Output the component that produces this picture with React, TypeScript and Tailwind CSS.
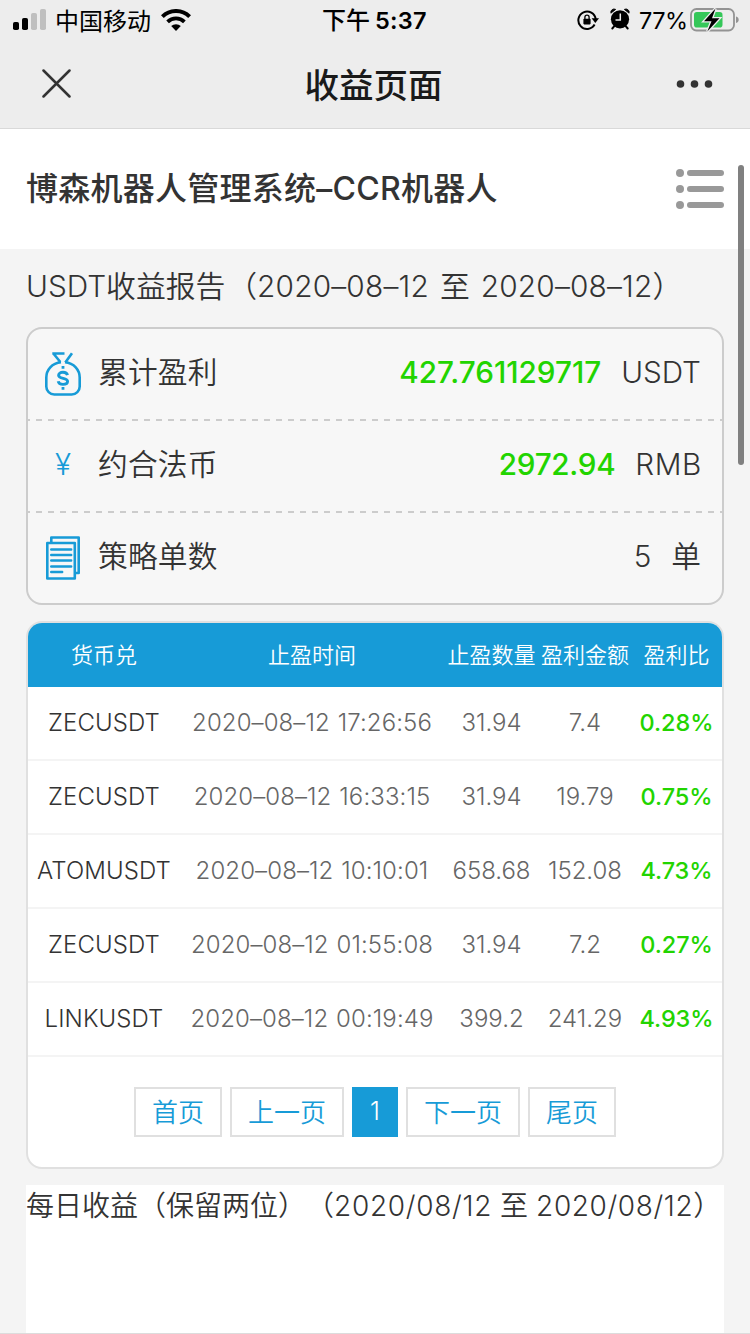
import type { ReactNode } from 'react';

interface ProfitRow {
  pair: string;
  time: string;
  amount: string;
  profit: string;
  rate: string;
}

const rows: ProfitRow[] = [
  { pair: 'ZECUSDT', time: '2020–08–12 17:26:56', amount: '31.94', profit: '7.4', rate: '0.28%' },
  { pair: 'ZECUSDT', time: '2020–08–12 16:33:15', amount: '31.94', profit: '19.79', rate: '0.75%' },
  { pair: 'ATOMUSDT', time: '2020–08–12 10:10:01', amount: '658.68', profit: '152.08', rate: '4.73%' },
  { pair: 'ZECUSDT', time: '2020–08–12 01:55:08', amount: '31.94', profit: '7.2', rate: '0.27%' },
  { pair: 'LINKUSDT', time: '2020–08–12 00:19:49', amount: '399.2', profit: '241.29', rate: '4.93%' },
];

const columns = ['货币兑', '止盈时间', '止盈数量', '盈利金额', '盈利比'];

function StatusBar() {
  return (
    <div className="flex h-10 items-center pl-[13px] text-[24px] text-black">
      <svg width="34" height="22" viewBox="0 0 34 22" className="-mt-0.5">
        <rect x="0" y="14" width="6" height="8" rx="1.8" fill="#000" />
        <rect x="9" y="10" width="6" height="12" rx="1.8" fill="#000" />
        <rect x="18" y="5" width="6" height="17" rx="1.8" fill="#bfbfbf" />
        <rect x="27" y="1" width="6" height="21" rx="1.8" fill="#bfbfbf" />
      </svg>
      <span className="ml-2 w-[97px] whitespace-nowrap pt-[3px]">中国移动</span>
      <svg width="30" height="22" viewBox="0 0 30 22" className="ml-[9px]">
        <path d="M1.4 7.6a19.3 19.3 0 0 1 27.2 0" fill="none" stroke="#000" strokeWidth="4" />
        <path d="M6.6 12.9a12 12 0 0 1 16.8 0" fill="none" stroke="#000" strokeWidth="3.8" />
        <path d="M15 22l-4.8-4.9a6.9 6.9 0 0 1 9.6 0z" fill="#000" />
      </svg>
      <span className="ml-[131px] w-[106px] whitespace-nowrap pt-0.5 font-medium">
        下午<span className="ml-[5px] text-[23.5px] font-semibold tracking-[0.3px]">5:37</span>
      </span>
      <svg width="22" height="22" viewBox="0 0 22 22" className="ml-[149px]">
        <path d="M17.6 15.6a8.7 8.7 0 1 1 1.1-5.4" fill="none" stroke="#000" strokeWidth="2" />
        <path d="M14.6 9.2h7.4l-3.7 4.8z" fill="#000" />
        <rect x="6.4" y="9.7" width="7.2" height="5.7" rx="0.8" fill="#000" />
        <path d="M7.9 10V8.2a2.1 2.1 0 0 1 4.2 0V10" fill="none" stroke="#000" strokeWidth="1.3" />
      </svg>
      <svg width="20" height="22" viewBox="0 0 20 22" className="-mt-0.5 ml-[11px]">
        <circle cx="10" cy="11.3" r="9.1" fill="#000" />
        <path d="M.9 5.2A3.3 3.3 0 0 1 5.7 1.4zM19.1 5.2a3.3 3.3 0 0 0-4.8-3.8z" fill="#000" stroke="#000" strokeWidth="0.8" />
        <path d="M4.3 18.2l-2 2.3M15.7 18.2l2 2.3" stroke="#000" strokeWidth="2" strokeLinecap="round" />
        <path d="M10.3 5.5v6.4H5.5" fill="none" stroke="#ededed" strokeWidth="1.5" />
      </svg>
      <span className="ml-[9px] w-[48px] whitespace-nowrap pt-0.5 text-[23.5px] tracking-[-0.5px]">77%</span>
      <svg width="50" height="26" viewBox="0 0 50 26" className="ml-[3px]">
        <rect x="1" y="2" width="43" height="21.5" rx="5.5" fill="none" stroke="#939393" strokeWidth="1.8" />
        <rect x="4" y="5" width="28.5" height="15.5" rx="2.8" fill="#35c759" />
        <path d="M46 9.5c2 .5 2.7 1.8 2.7 3.3s-.7 2.8-2.7 3.3z" fill="#939393" />
        <path d="M25.5 1.5L14 14.3h7.5l-4.2 10.2L29.5 11.2h-7.5z" fill="#000" stroke="#ededed" strokeWidth="2.6" paintOrder="stroke" />
      </svg>
    </div>
  );
}

function NavBar() {
  return (
    <div className="flex h-[88px] items-center justify-between pl-[42px] pr-[37px]">
      <svg width="29" height="29" viewBox="0 0 29 29" className="-mt-0.5">
        <path d="M1.5 1.5l26 26M27.5 1.5l-26 26" stroke="#333" strokeWidth="2.5" strokeLinecap="round" />
      </svg>
      <h1 className="pt-1 text-[34.5px] font-medium leading-none text-[#1a1a1a]">收益页面</h1>
      <svg width="37" height="8" viewBox="0 0 37 8" fill="#333">
        <circle cx="4.5" cy="4" r="3.8" />
        <circle cx="18.5" cy="4" r="3.8" />
        <circle cx="32.5" cy="4" r="3.8" />
      </svg>
    </div>
  );
}

function MenuIcon() {
  return (
    <svg width="48" height="40" viewBox="0 0 48 40" fill="#999">
      <circle cx="4" cy="4" r="4" />
      <circle cx="4" cy="20" r="4" />
      <circle cx="4" cy="36" r="4" />
      <rect x="11" y="1" width="37" height="6" rx="3" />
      <rect x="11" y="17" width="37" height="6" rx="3" />
      <rect x="11" y="33" width="37" height="6" rx="3" />
    </svg>
  );
}

function MoneyBagIcon() {
  return (
    <svg width="36" height="44" viewBox="0 0 36 44" fill="none" stroke="#179bd7" strokeWidth="2.6">
      <path d="M16 10.2C7 11 1.3 18 1.3 25.5V34.5a8 8 0 0 0 8 8H26.7a8 8 0 0 0 8-8V25.5C34.7 18 29 11 20 10.2" />
      <path d="M7.3 1.5H19.5M8.8 2L15.3 10M27 1.2L20.3 10.5" />
      <path
        d="M22.5 23.2C22 21.2 20.2 20.3 18 20.3c-2.7 0-4.4 1.2-4.4 2.9 0 4.3 9 2 9 6.1 0 1.900-1.900 3.100-4.600 3.100-2.500 0-4.400-1-4.800-3.100"
        strokeWidth="2.9"
      />
      <path d="M18 14v2.8M18 35v2.8" strokeWidth="2.8" />
    </svg>
  );
}

function OrdersIcon() {
  return (
    <svg width="36" height="44" viewBox="0 0 36 44" fill="none" stroke="#179bd7" strokeWidth="2.6" strokeLinejoin="round">
      <path d="M6.3 6V1.5H33.7V37H30" />
      <rect x="2.3" y="7" width="27.5" height="35.5" />
      <path d="M6.2 13.5h20M6.2 19h20M6.2 24.5h20M6.2 30.5h20M6.2 36h11" strokeLinecap="round" strokeWidth="2.4" />
    </svg>
  );
}

interface SummaryRowProps {
  icon: ReactNode;
  label: string;
  children: ReactNode;
}

function SummaryRow({ icon, label, children }: SummaryRowProps) {
  return (
    <div className="flex h-[90px] items-center pl-[17px] pr-[21px] text-[29.7px]">
      <div className="flex w-9 justify-center">{icon}</div>
      <span className="-mt-[3px] ml-[17px] tracking-[0.2px]">{label}</span>
      <div className="-mt-[3px] ml-auto flex items-center">{children}</div>
    </div>
  );
}

function Divider() {
  return (
    <div className="h-0.5 bg-[repeating-linear-gradient(to_right,#ccc_0_2px,transparent_2px_8px,#ccc_8px_12px)]" />
  );
}

function PageButton({ children }: { children: ReactNode }) {
  return (
    <button className="flex h-[50px] items-center border-2 border-[#e0e0e0] px-4 pt-0.5 text-[26px] font-[350] leading-none text-[#179bd7]">
      {children}
    </button>
  );
}

export default function App() {
  return (
    <div className="relative flex h-[1334px] w-[750px] flex-col overflow-hidden bg-[#f4f4f4] font-['Inter','Noto_Sans_CJK_SC',sans-serif] text-[#333] [text-spacing-trim:space-all]">
      <header className="border-b border-[#d9d9d9] bg-[#ededed]">
        <StatusBar />
        <NavBar />
      </header>

      <div className="flex h-[120px] items-center justify-between bg-white pl-[26px] pr-[26px]">
        <h2 className="whitespace-nowrap text-[32px] font-medium leading-none tracking-[0.25px]">博森机器人管理系统–CCR机器人</h2>
        <MenuIcon />
      </div>

      <main className="flex flex-1 flex-col px-[26px] font-[350]">
        <p className="flex h-[78px] items-center whitespace-nowrap pb-[3px] text-[29.8px]">
          <span>
            USDT收益报告<span className="ml-0.5">（</span>
            <span className="tracking-[0.2px]">2020–08–12</span>
            <span className="mx-[11px]">至</span>
            <span className="tracking-[0.2px]">2020–08–12</span>）
          </span>
        </p>

        <section className="rounded-2xl border-2 border-[#ccc] bg-[#f7f7f7]">
          <SummaryRow icon={<MoneyBagIcon />} label="累计盈利">
            <b className="mr-5 font-medium text-[#22d400]">427.761129717</b>USDT
          </SummaryRow>
          <Divider />
          <SummaryRow icon={<span className="-mt-[3px] text-[#179bd7]">¥</span>} label="约合法币">
            <b className="mr-5 font-medium tracking-[-0.3px] text-[#22d400]">2972.94</b>
            <span className="-mr-px tracking-[0.6px]">RMB</span>
          </SummaryRow>
          <Divider />
          <SummaryRow icon={<OrdersIcon />} label="策略单数">
            <span className="mr-5">5</span>单
          </SummaryRow>
        </section>

        <section className="mt-4 h-[548px] overflow-hidden rounded-2xl border-2 border-[#e0e0e0] bg-white">
          <div className="grid h-16 grid-cols-[152px_264px_95px_92px_91px] items-center bg-[#179bd7] text-center text-[22px] text-white">
            {columns.map((name) => (
              <span key={name} className="whitespace-nowrap">{name}</span>
            ))}
          </div>
          {rows.map((row) => (
            <div
              key={row.time}
              className="grid h-[74px] grid-cols-[152px_264px_95px_92px_91px] items-center border-b-2 border-[#f4f4f4] text-center text-[24px] text-[#666]"
            >
              <span className="tracking-[0.1px] text-[#333]">{row.pair}</span>
              <span className="whitespace-nowrap tracking-[0.1px] [word-spacing:1px]">{row.time}</span>
              <span>{row.amount}</span>
              <span>{row.profit}</span>
              <span className="text-[23.5px] font-medium tracking-[-0.1px] text-[#22d400]">{row.rate}</span>
            </div>
          ))}
          <div className="mt-[30px] flex justify-center gap-2">
            <PageButton>首页</PageButton>
            <PageButton>上一页</PageButton>
            <span className="flex h-[50px] w-[46px] items-center justify-center bg-[#179bd7] text-[25px] text-white">1</span>
            <PageButton>下一页</PageButton>
            <PageButton>尾页</PageButton>
          </div>
        </section>

        <section className="mt-4 flex-1 bg-white">
          <p className="flex h-10 items-center whitespace-nowrap pt-px text-[28px]">
            <span>
              每日收益（保留两位）（<span className="tracking-[0.7px]">2020/08/12</span>
              <span className="mx-2">至</span>
              <span className="tracking-[0.6px]">2020/08/12</span>）
            </span>
          </p>
        </section>
      </main>
      <div className="h-px bg-[#dcdcdc]" />

      {/* scrollbar thumb */}
      <div className="absolute right-1.5 top-[165px] h-[300px] w-1.5 rounded-full bg-[#808080]" />
    </div>
  );
}
